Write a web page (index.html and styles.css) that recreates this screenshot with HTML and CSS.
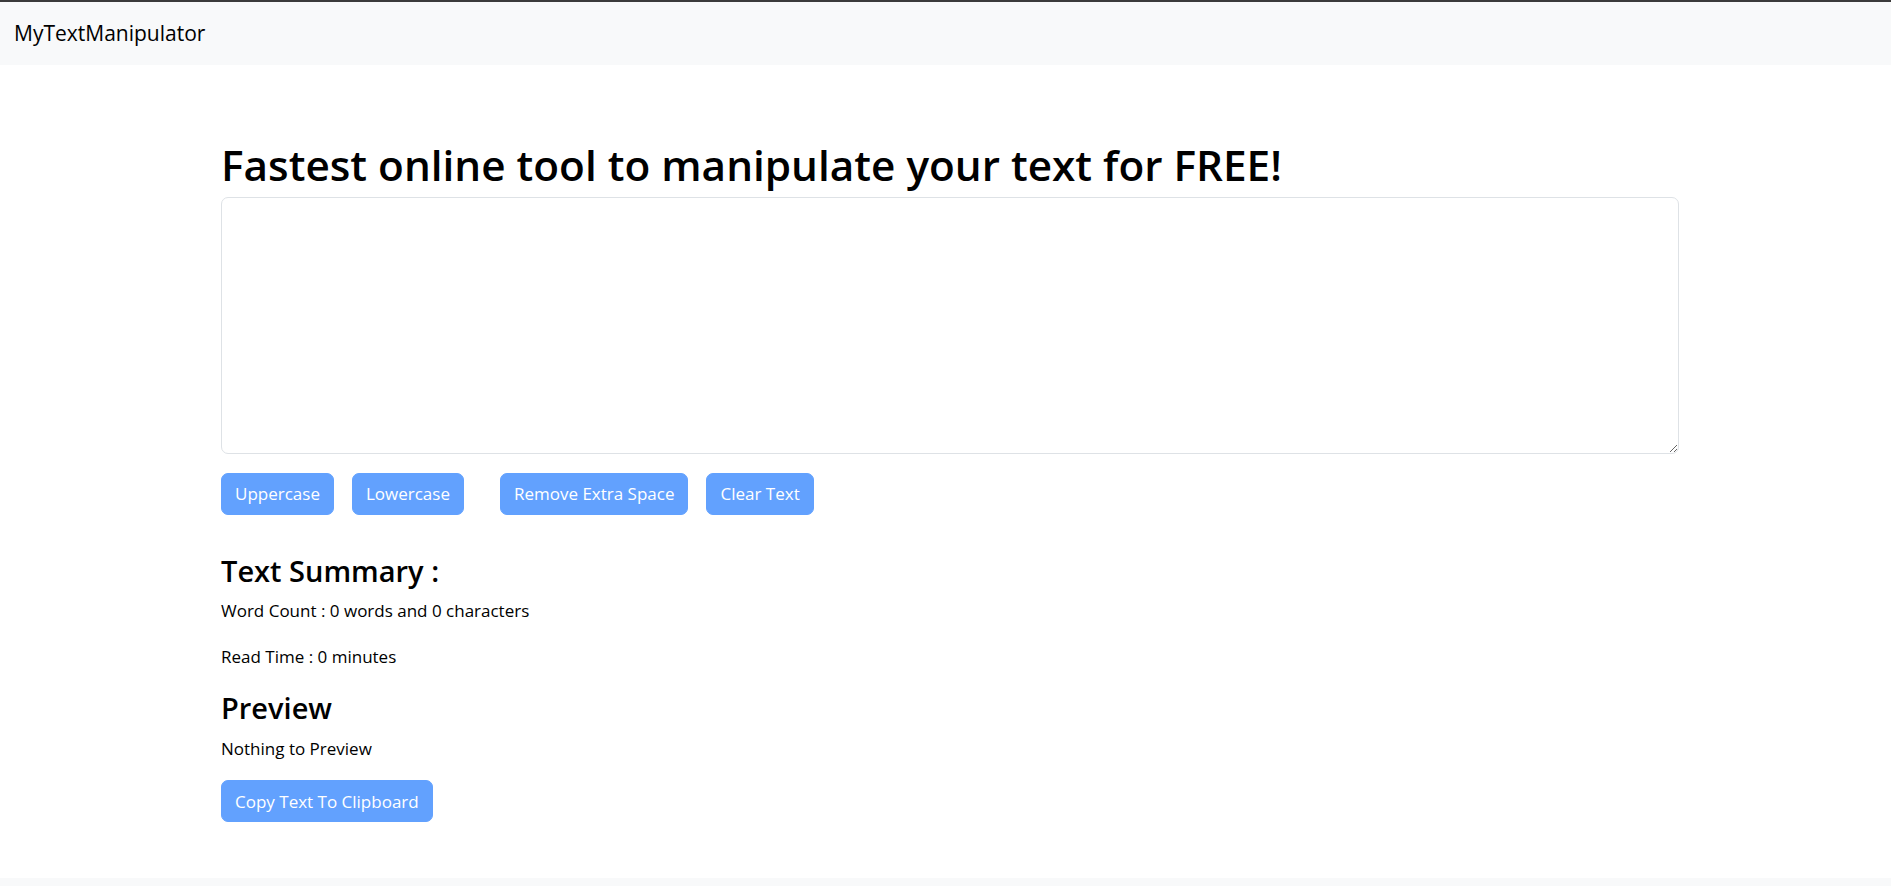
FILE: index.html
```html
<!DOCTYPE html>
<html lang="en">
<head>
<meta charset="utf-8">
<title>MyTextManipulator</title>
<link rel="stylesheet" href="styles.css">
</head>
<body>
<nav class="navbar">
  <a class="brand" href="#">MyTextManipulator</a>
</nav>
<main class="container">
  <h1 class="title">Fastest online tool to manipulate your text for FREE!</h1>
  <textarea class="text-input" rows="8"></textarea>
  <div class="actions">
    <button class="btn">Uppercase</button>
    <button class="btn">Lowercase</button>
    <button class="btn btn-wide-gap">Remove Extra Space</button>
    <button class="btn">Clear Text</button>
  </div>
  <h2 class="section-title summary-title">Text Summary :</h2>
  <p class="line">Word Count : 0 words and 0 characters</p>
  <p class="line">Read Time : 0 minutes</p>
  <h2 class="section-title preview-title">Preview</h2>
  <p class="line line-last">Nothing to Preview</p>
  <button class="btn">Copy Text To Clipboard</button>
</main>
<footer class="footer"></footer>
</body>
</html>
```

FILE: styles.css
```css
html, body {
  margin: 0;
  padding: 0;
}
body {
  font-family: "Open Sans", "Noto Sans", sans-serif;
  font-size: 17.6px;
  line-height: 1.5;
  color: #212529;
  background: #fff;
  border-top: 2px solid #3b3b3b;
}
.navbar {
  height: 63px;
  background: #f8f9fa;
  display: flex;
  align-items: center;
  padding-left: 14px;
}
.brand {
  font-size: 21px;
  color: #000;
  text-decoration: none;
  line-height: 1.5;
}
.container {
  margin-left: 221px;
  width: 1458px;
  padding-top: 75px;
  padding-bottom: 56px;
  display: flex;
  flex-direction: column;
  align-items: flex-start;
}
.title {
  margin: 0 0 6px;
  font-size: 42.3px;
  font-weight: 600;
  line-height: 1.2;
  color: #000;
}
.text-input {
  box-sizing: border-box;
  width: 1458px;
  height: 257px;
  border: 1px solid #dee2e6;
  border-radius: 7px;
  padding: 7px 13px;
  font-family: inherit;
  font-size: 17.6px;
  margin: 0;
  resize: vertical;
}
.actions {
  display: flex;
  gap: 18px;
  margin-top: 19px;
}
.btn {
  box-sizing: border-box;
  height: 42px;
  padding: 0 13px;
  border: 1px solid #62a1fe;
  background: #62a1fe;
  color: #fff;
  border-radius: 7px;
  font-family: inherit;
  font-size: 17px;
  line-height: 1;
}
.btn-wide-gap {
  margin-left: 18px;
}
.section-title {
  margin: 0 0 11px;
  font-size: 29px;
  font-weight: 600;
  line-height: 1.2;
  color: #000;
}
.summary-title {
  margin-top: 39px;
  margin-bottom: 9px;
}
.preview-title {
  margin-top: 1px;
}
.line {
  margin: 0 0 20px;
  font-size: 17px;
  line-height: 26px;
  color: #000;
}
.line-last {
  margin-bottom: 18px;
}
.footer {
  height: 40px;
  background: #f8f9fa;
}
```
